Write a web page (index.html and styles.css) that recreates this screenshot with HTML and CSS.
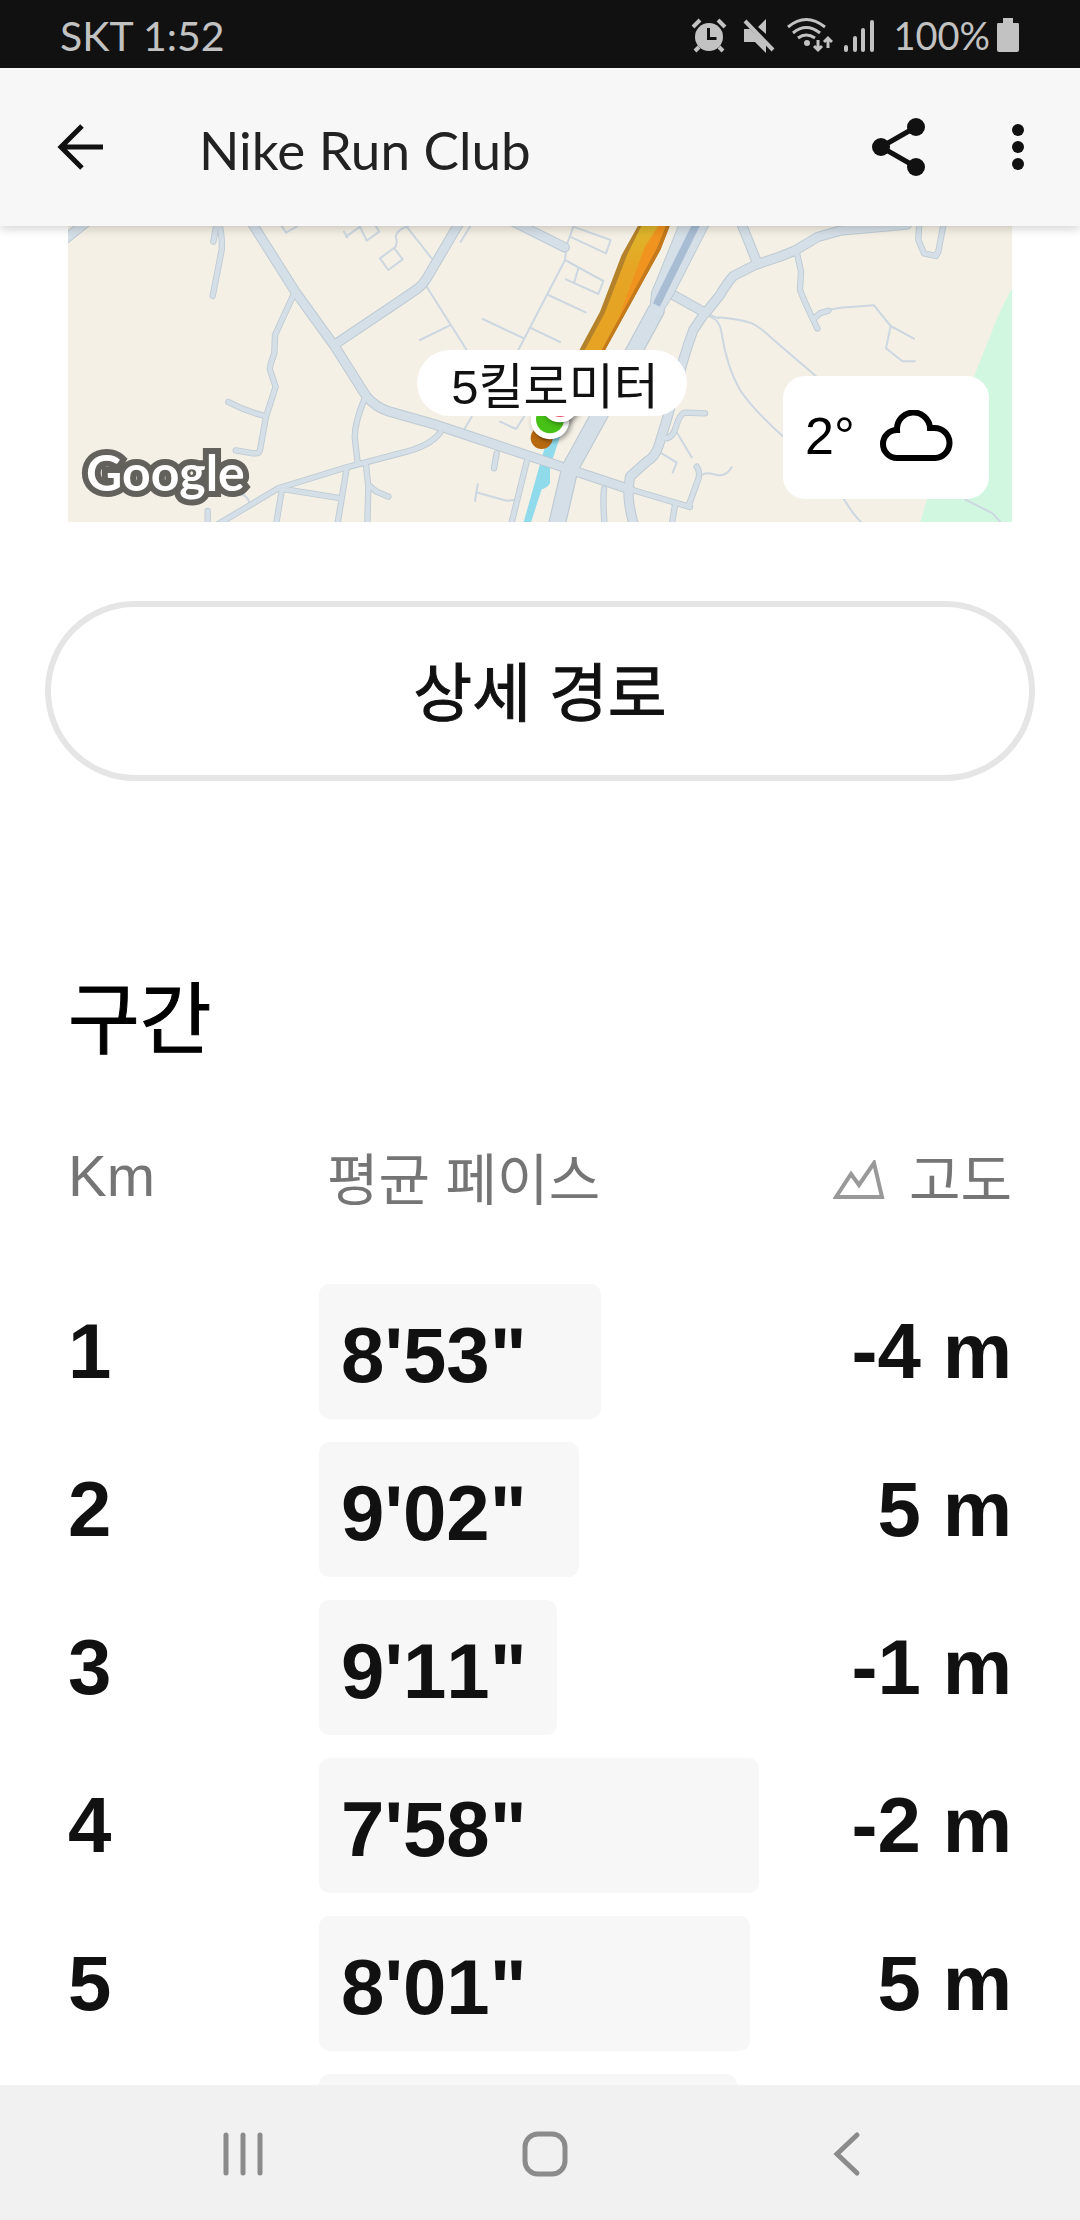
FILE: index.html
```
<!DOCTYPE html>
<html lang="ko">
<head>
  <meta charset="UTF-8" />
  <meta name="viewport" content="width=device-width, initial-scale=1.0"/>
  <title>Nike Run Club</title>
  <link rel="stylesheet" href="styles.css">
</head>
<body>
  <div class="status-bar">
    <span>SKT 1:52</span>
    <div class="status-icons">
      <svg width="36" height="36" viewBox="0 0 36 36">
        <circle cx="18" cy="20" r="14" fill="currentColor"/>
        <path d="M2 10L9 3M34 10L27 3M8 30l-4 4M28 30l4 4" stroke="currentColor" stroke-width="4" fill="none"/>
        <path d="M17.500 11v10.500h8" stroke="#111" stroke-width="3" fill="none"/>
      </svg>
      <svg class="icon-mute" width="32" height="36" viewBox="0 0 32 36">
        <path d="M1 12h6l16 15v9L12 25H1zM15 10l8-8v15z" fill="currentColor"/>
        <path d="M2 4l28 29" stroke="currentColor" stroke-width="4"/>
      </svg>
      <svg class="icon-wifi" width="46" height="36" viewBox="0 0 46 36">
        <g fill="none" stroke="currentColor" stroke-width="3">
          <path d="M1 10Q19-5 38 10M6 16Q19 5 33 16M11 21Q19 15 28 21"/>
          <path d="M31 23v10M27 29l4 4 4-4M41 31V21M37 25l4-4 4 4"/>
        </g>
        <circle cx="20" cy="26" r="3" fill="currentColor"/>
      </svg>
      <svg class="icon-signal" width="32" height="36" viewBox="0 0 32 36">
        <path d="M3 30v3M12 21v12M20 13v20M29 5v28" stroke="currentColor" stroke-width="4" stroke-linecap="round"/>
      </svg>
      <span class="battery-level">100%</span>
      <svg class="icon-battery" width="24" height="36" viewBox="0 0 24 36">
        <path d="M7 1h10v5h5q1 0 1 2v25q0 2-2 2H3q-2 0-2-2V8q0-2 1-2h5z" fill="currentColor"/>
      </svg>
    </div>
  </div>

  <header class="app-bar">
    <button class="icon-btn" type="button" aria-label="뒤로">
      <svg width="48" height="48" viewBox="0 0 48 48" fill="none" stroke="currentColor" stroke-width="5">
        <path d="M47 24H6M26 3L5 24l21 21"/>
      </svg>
    </button>
    <h1>Nike Run Club</h1>
    <button class="icon-btn" type="button" aria-label="공유">
      <svg width="54" height="60" viewBox="0 0 54 60">
        <path d="M44 10L9 30l35 20" fill="none" stroke="currentColor" stroke-width="5"/>
        <g fill="currentColor"><circle cx="44" cy="10" r="9"/><circle cx="9" cy="30" r="9"/><circle cx="44" cy="50" r="9"/></g>
      </svg>
    </button>
    <button class="icon-btn more-btn" type="button" aria-label="더보기">
      <svg width="12" height="48" viewBox="0 0 12 48" fill="currentColor">
        <circle cx="6" cy="7" r="6"/><circle cx="6" cy="24" r="6"/><circle cx="6" cy="41" r="6"/>
      </svg>
    </button>
  </header>

  <main class="content">
    <div class="map">
      <svg class="map-canvas" viewBox="0 0 2832 888">
        <defs>
          <linearGradient id="track" x1="0" y1="0" x2="0" y2="1">
            <stop offset="0" stop-color="#dcb82c"/>
            <stop offset="0.35" stop-color="#e6a524"/>
            <stop offset="1" stop-color="#e6a324"/>
          </linearGradient>
          <g id="roads-wide">
            <path transform="translate(-24 -18)" d="M565 -8L705 214L825 380L920 530Q945 560 985 574L1120 612L1520 745L1710 808"/>
            <path transform="translate(996 -18)" d="M-190 370L0 242L50 208Q68 195 80 175L180 5M320 -5L494 82"/>
            <path transform="translate(1956 -18)" d="M-44 280L0 225Q20 190 40 168L105 135L180 110L225 92L295 50L360 32L560 14M60 0L110 125"/>
            <path transform="translate(996 -18)" d="M820 225L915 278L880 330Q865 370 850 420L800 600L775 680Q765 710 740 725L690 770L685 810Q685 860 702 915"/>
            <path transform="translate(-24 -18)" d="M0 70L75 10"/>
          </g>
          <g id="roads-narrow">
            <path transform="translate(-24 -18)" d="M705 215L645 345L643 400Q628 440 630 450L647 500L618 590L600 690Q597 702 580 700L527 691M505 546Q560 575 615 588M912 540Q880 620 885 660L893 728M918 735L925 800L922 915M860 745L832 915M675 808L845 835M665 812L648 915M925 795L950 815L985 830M443 873V915M470 10L460 65M478 10Q488 60 485 90L458 228"/>
            <path transform="translate(-24 -18)" d="M1140 638Q1110 680 1020 700L860 742L655 805L475 912"/>
            <path transform="translate(996 -18)" d="M800 655Q820 650 828 620Q840 580 855 578L915 580M890 740Q905 760 890 790L865 860M690 808L870 861M825 855L815 915M612 806Q608 850 614 915M290 700L282 745M380 725L333 915"/>
            <path transform="translate(1956 -18)" d="M230 95L243 155L240 210Q255 250 292 325M285 293L300 280L325 272M598 5L595 60L612 100L648 108L655 95L672 5"/>
          </g>
        </defs>

        <rect width="2832" height="888" fill="#f4f0e5"/>
        <path transform="translate(1956 -18)" fill="#d1f7e1" d="M876 205Q830 290 812 345Q785 410 762 470L622 835L600 910H876z"/>
        <path transform="translate(996 -18)" fill="#8fdbec" d="M435 680L490 620L450 740V790Q440 805 425 808L392 910H370L415 750z"/>

        <g class="paths">
          <path transform="translate(-24 -18)" d="M665 18L678 38L710 20M858 50L900 20L920 62L958 35L945 15M852 35L862 52M1000 85L960 115L985 150L1028 118L1003 85Q1015 70 1007 50Q1010 30 1044 18M535 825Q560 820 568 848"/>
          <path transform="translate(996 -18)" d="M20 20L95 115M80 200L200 390M60 360L148 317M210 20L182 65M500 75L520 20L632 60L618 100L510 50M498 90L495 120L355 390M495 120L610 183L595 222L498 178M535 145L522 190M445 225L557 277M395 325L480 366M248 297L372 355M215 590L193 628M300 605L348 627L372 590M233 793L225 843M228 817L320 842L345 840M832 640L875 712M785 700L830 728L818 758M905 765Q920 755 950 765Q980 770 995 742M930 285L955 295"/>
          <path transform="translate(1956 -18)" d="M325 270L360 263L462 256L512 318L582 356M512 318L498 385L547 424H585M-5 292Q80 300 105 315Q130 330 150 350L290 470M-30 290Q0 300 5 340Q20 440 60 510Q100 570 190 650M370 835Q400 885 425 908M735 838L818 880L840 905"/>
        </g>

        <use href="#roads-narrow" class="casing" stroke-width="19"/>
        <use href="#roads-wide" class="casing" stroke-width="31"/>
        <use href="#roads-narrow" class="road" stroke-width="14"/>
        <use href="#roads-wide" class="road" stroke-width="25"/>

        <!-- highway -->
        <g transform="translate(996 -18)" stroke-linecap="round">
          <path d="M768 272L590 600L510 745L468 925" fill="none" stroke="#bccad4" stroke-width="53"/>
          <path d="M838 10L770 180L755 215L750 262L785 280L820 225L930 10z" fill="#d5dfe7" stroke="#bccad4" stroke-width="3"/>
          <path d="M768 272L590 600L510 745L468 925" fill="none" stroke="#d5dfe7" stroke-width="46"/>
          <path d="M490 743L540 758" stroke="#d5dfe7" stroke-width="25"/>
          <path d="M893 5L769 255" stroke="#a8bcd4" stroke-width="23" stroke-linecap="butt"/>
        </g>

        <!-- recorded run -->
        <g transform="translate(996 -18)">
          <path d="M718 10L665 105L600 275L535 396H612L782 88L812 10z" fill="#b3822a"/>
          <path d="M800 10L770 80L590 396H612L782 88L812 10z" fill="#c4791b"/>
          <path d="M728 10L682 103L614 280L551 396H602L770 85L800 10z" fill="url(#track)"/>
          <path d="M780 10H800L770 85L650 308L685 215L735 80z" fill="#f0931f"/>
          <circle cx="425" cy="654" r="33" fill="#b8690f"/>
          <path d="M410 640Q430 670 455 652" fill="none" stroke="#9c570b" stroke-width="4"/>
          <circle class="pin" cx="450" cy="600" r="58" fill="#fff"/>
          <circle cx="450" cy="598" r="42" fill="#47c116"/>
          <circle class="pin" cx="480" cy="550" r="57" fill="#fff"/>
          <circle cx="480" cy="550" r="41" fill="#e8546a"/>
        </g>
      </svg>
      <span class="map-label">5킬로미터</span>
      <span class="map-logo">Google</span>
      <div class="weather">
        <span>2°</span>
        <svg width="74" height="52" viewBox="0 0 74 52" fill="none" stroke="currentColor" stroke-width="6">
          <path d="M18 48a14 14 0 0 1 0-28a16 16 0 0 1 33-2h4a15 15 0 0 1 1 30z"/>
        </svg>
      </div>
    </div>

    <button class="route-btn" type="button">상세 경로</button>

    <section class="splits">
      <h2>구간</h2>
      <table>
        <colgroup>
          <col class="col-km">
          <col>
          <col class="col-elevation">
        </colgroup>
        <thead>
          <tr>
            <th class="km-head">Km</th>
            <th class="pace-head">평균 페이스</th>
            <th class="elevation">
              <svg width="52" height="40" viewBox="0 0 52 40" fill="none" stroke="#999" stroke-width="4">
                <path d="M3 37L18 14l8 11L41 3l8 34z"/>
              </svg>고도</th>
          </tr>
        </thead>
        <tbody>
          <tr><td>1</td><td><div class="pace" style="width: 64%">8'53"</div></td><td class="elevation">-4 m</td></tr>
          <tr><td>2</td><td><div class="pace" style="width: 59%">9'02"</div></td><td class="elevation">5 m</td></tr>
          <tr><td>3</td><td><div class="pace" style="width: 54%">9'11"</div></td><td class="elevation">-1 m</td></tr>
          <tr><td>4</td><td><div class="pace" style="width: 100%">7'58"</div></td><td class="elevation">-2 m</td></tr>
          <tr><td>5</td><td><div class="pace" style="width: 98%">8'01"</div></td><td class="elevation">5 m</td></tr>
          <tr><td></td><td><div class="pace" style="width: 95%"></div></td><td></td></tr>
        </tbody>
      </table>
    </section>
  </main>

  <nav class="nav-bar">
    <button class="icon-btn" type="button" aria-label="최근 앱">
      <svg width="46" height="46" viewBox="0 0 46 46" stroke="currentColor" stroke-width="5" stroke-linecap="round">
        <path d="M6 4v38M23 4v38M40 4v38"/>
      </svg>
    </button>
    <button class="icon-btn" type="button" aria-label="홈">
      <svg width="46" height="46" viewBox="0 0 46 46" fill="none" stroke="currentColor" stroke-width="5">
        <rect x="3" y="3" width="40" height="40" rx="13"/>
      </svg>
    </button>
    <button class="icon-btn" type="button" aria-label="이전">
      <svg width="46" height="46" viewBox="0 0 46 46" fill="none" stroke="currentColor" stroke-width="5" stroke-linecap="round">
        <path d="M33 4L13 23l20 19"/>
      </svg>
    </button>
  </nav>
</body>
</html>
```
FILE: styles.css
```
* {
  box-sizing: border-box;
}
body {
  margin: 0;
  height: 100vh;
  display: flex;
  flex-direction: column;
  background-color: #fff;
  font-family: "Liberation Sans", "Noto Sans CJK KR", sans-serif;
  color: #111;
}
svg {
  display: block;
  flex-shrink: 0;
}
.status-bar {
  flex-shrink: 0;
  height: 68px;
  padding: 2px 60px 0;
  display: flex;
  align-items: center;
  justify-content: space-between;
  background-color: #111;
  color: #c2c2c2;
  font-family: Lato, sans-serif;
  font-size: 41px;
}
.status-icons {
  display: flex;
  align-items: center;
}
.battery-level {
  font-size: 38px;
}
.icon-mute {
  margin-left: 16px;
}
.icon-wifi {
  margin-left: 12px;
}
.icon-signal {
  margin: 0 18px 0 10px;
}
.icon-battery {
  margin-left: 6px;
}
.app-bar {
  flex-shrink: 0;
  position: relative;
  z-index: 1;
  height: 158px;
  padding: 0 56px;
  display: flex;
  align-items: center;
  background-color: #f7f7f7;
  box-shadow: 0 2px 10px rgba(0, 0, 0, 0.2);
}
.app-bar h1 {
  flex: 1;
  margin: 0 0 0 95px;
  padding-top: 4px;
  font-family: Lato, sans-serif;
  font-size: 53px;
  font-weight: normal;
  color: #222;
}
.icon-btn {
  padding: 0;
  border: none;
  background: none;
  color: inherit;
  cursor: pointer;
}
.more-btn {
  margin-left: 86px;
}
.content {
  flex: 1;
  min-height: 0;
  overflow-y: auto;
  scrollbar-width: none;
}
.map {
  position: relative;
  margin: 0 68px;
}
.map-canvas {
  width: 100%;
  height: auto;
}
.paths {
  fill: none;
  stroke: #ccd7e1;
  stroke-width: 6;
  stroke-linecap: round;
  stroke-linejoin: round;
}
.casing,
.road {
  fill: none;
  stroke: #bccad4;
  stroke-linecap: round;
  stroke-linejoin: round;
}
.road {
  stroke: #d5dfe7;
}
.pin {
  filter: drop-shadow(6px 6px 8px rgba(0, 0, 0, 0.4));
}
.map-label {
  position: absolute;
  top: 124px;
  left: 37%;
  height: 66px;
  padding: 0 28px 0 34px;
  border-radius: 33px;
  background-color: #fff;
  font-size: 49px;
  line-height: 74px;
  white-space: nowrap;
}
.map-logo {
  position: absolute;
  left: 18px;
  bottom: 20px;
  color: #fff;
  font-family: Lato, sans-serif;
  font-size: 50px;
  font-weight: bold;
  line-height: 60px;
  -webkit-text-stroke: 12px #63615c;
  paint-order: stroke fill;
}
.weather {
  position: absolute;
  right: 23px;
  bottom: 23px;
  width: 206px;
  height: 123px;
  padding: 0 36px 4px 22px;
  display: flex;
  align-items: center;
  justify-content: space-between;
  border-radius: 22px;
  background-color: #fff;
  color: #000;
  font-size: 52px;
}
.route-btn {
  display: block;
  width: calc(100% - 90px);
  height: 180px;
  margin: 79px 45px 0;
  padding: 0 0 6px;
  border: 6px solid #e5e5e5;
  border-radius: 90px;
  background-color: #fff;
  color: #111;
  font-family: inherit;
  font-size: 64px;
  font-weight: normal;
  -webkit-text-stroke: 1px #111;
  cursor: pointer;
}
.splits {
  margin: 194px 68px 0;
}
.splits h2 {
  margin: 0 0 17px;
  color: #000;
  font-size: 78px;
  font-weight: normal;
  line-height: 92px;
  -webkit-text-stroke: 1px #000;
}
table {
  width: 100%;
  table-layout: fixed;
  border-collapse: collapse;
}
.col-km {
  width: 251px;
}
.col-elevation {
  width: 253px;
}
th {
  height: 188px;
  padding: 0 0 6px;
  color: #757575;
  font-size: 56px;
  font-weight: normal;
  text-align: left;
}
.km-head {
  font-size: 58px;
}
.pace-head {
  padding-left: 8px;
}
td {
  height: 158px;
  padding: 0;
  font-size: 78px;
  font-weight: bold;
  font-kerning: none;
}
.elevation {
  text-align: right;
}
.elevation svg {
  display: inline-block;
  margin-right: 24px;
}
.pace {
  height: 135px;
  padding: 4px 0 0 22px;
  border-radius: 10px;
  background-color: #f7f7f7;
  line-height: 135px;
}
.nav-bar {
  flex-shrink: 0;
  height: 135px;
  padding: 3px 82px 0 92px;
  display: grid;
  grid-template-columns: repeat(3, 1fr);
  place-items: center;
  background-color: #f1f1f1;
  color: #8b8b8b;
}
```
